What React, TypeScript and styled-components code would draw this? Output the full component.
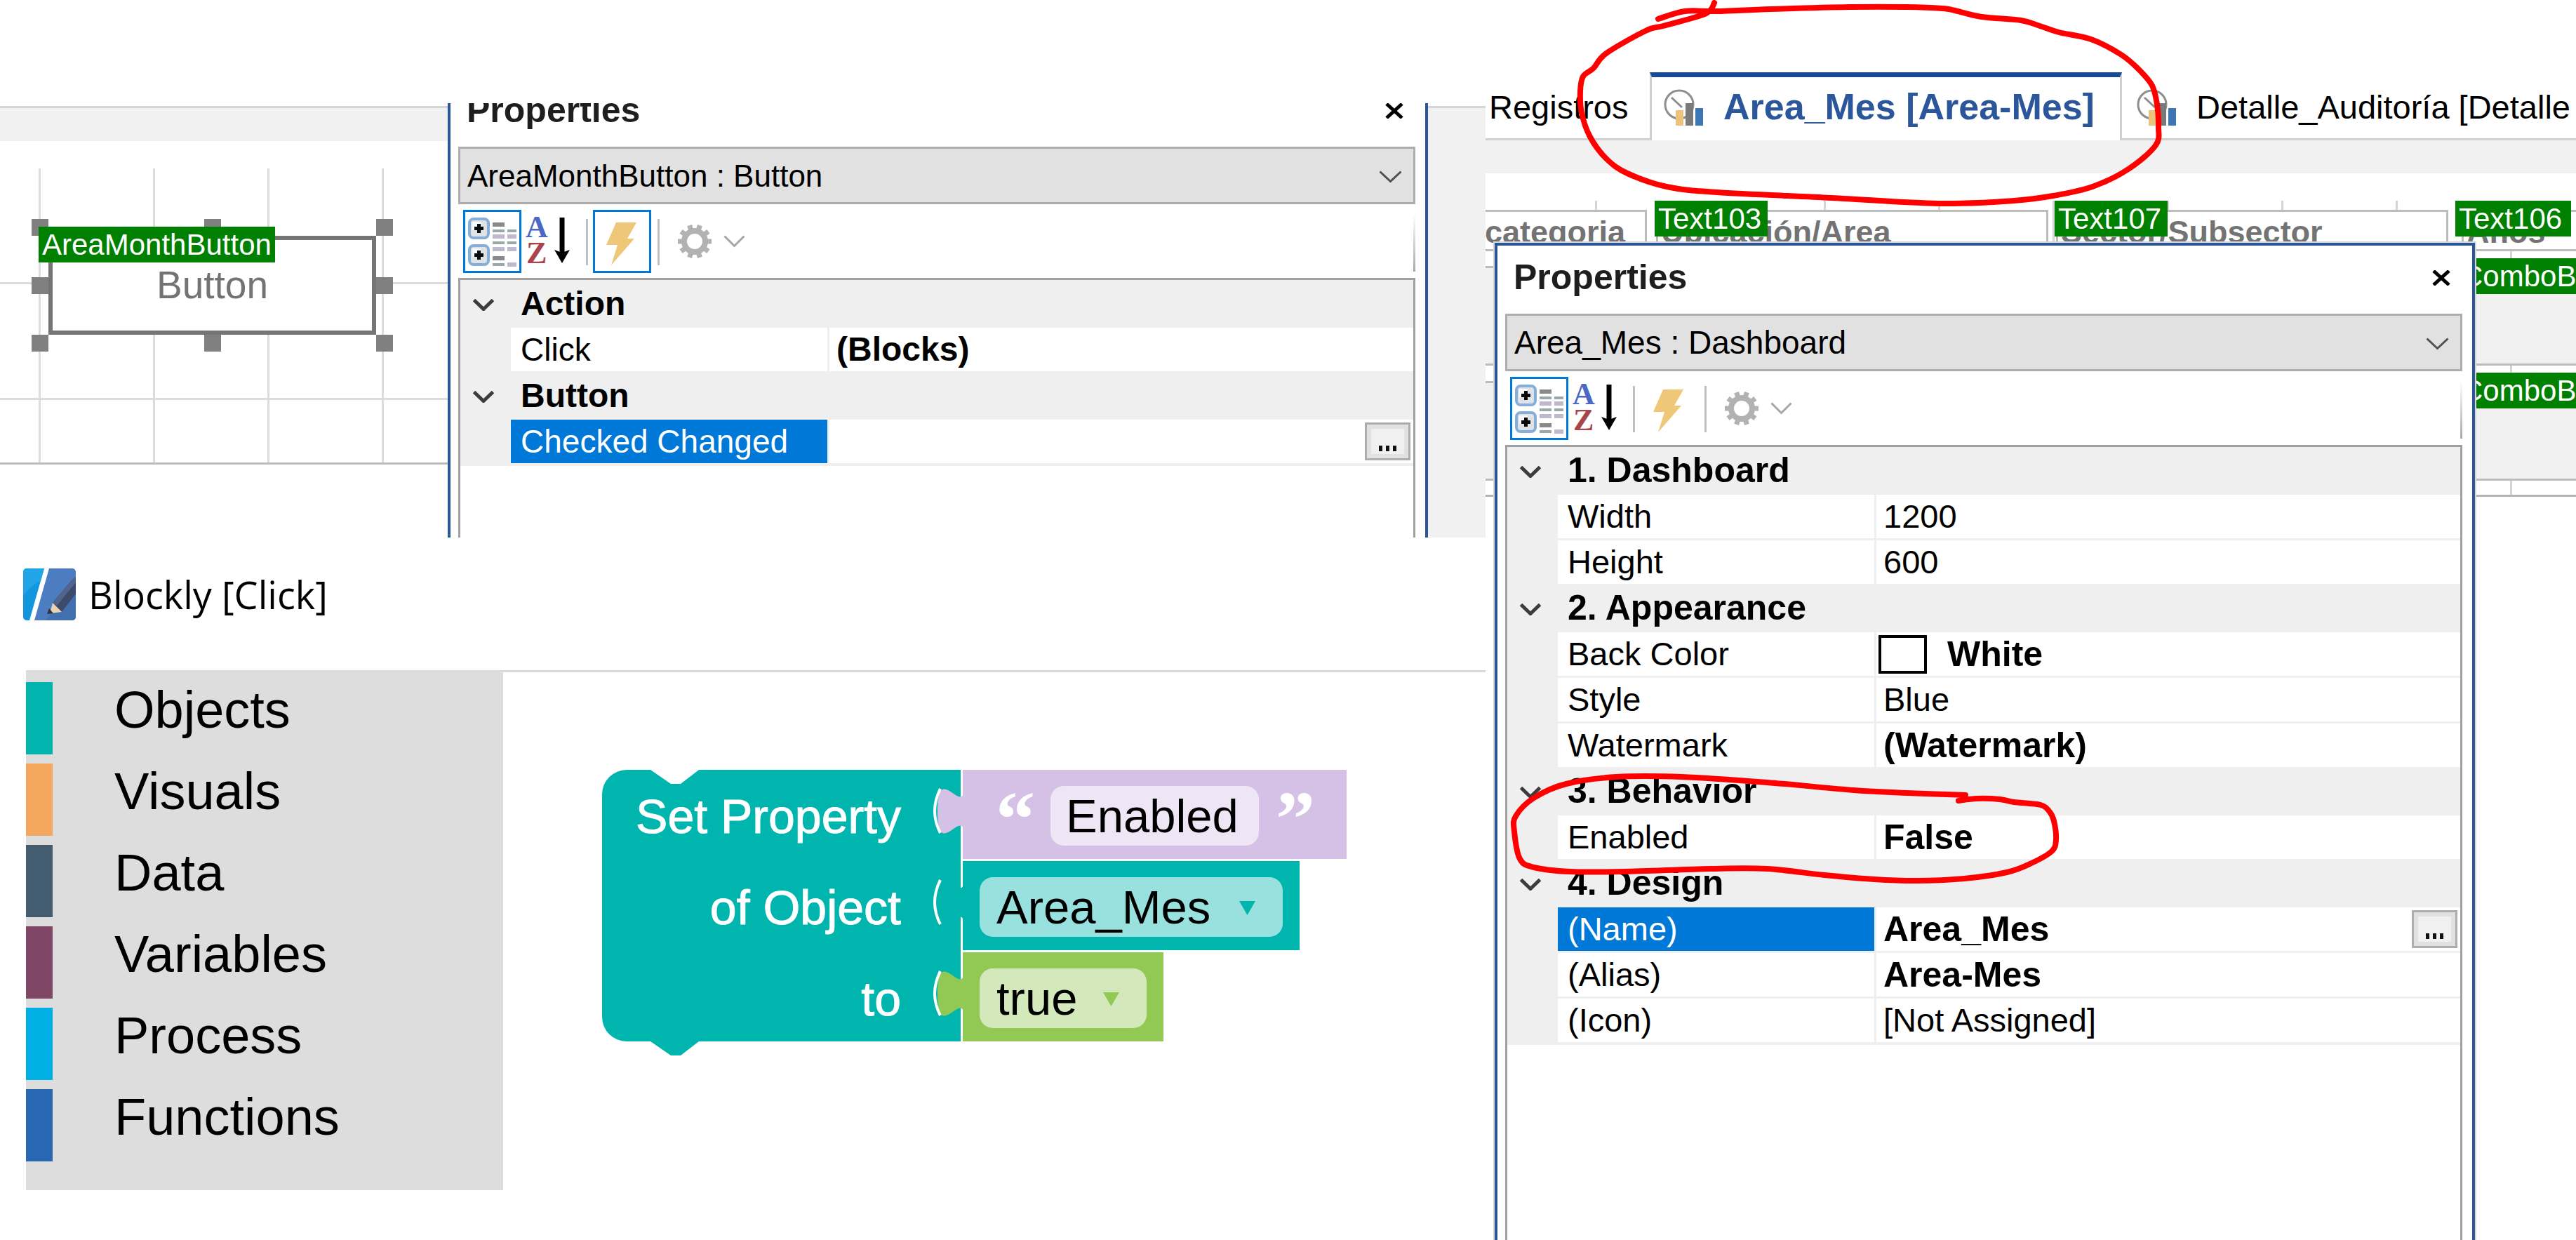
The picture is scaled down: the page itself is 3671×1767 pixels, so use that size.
import React from "react";
import styled, { createGlobalStyle, css } from "styled-components";

const BLUE = "#2b579a";
const ACCENT = "#0078d7";
const TEAL = "#00b5ad";
const LILAC = "#d4c1e5";
const GREEN = "#92c955";
const SANS = `"Liberation Sans", Arial, sans-serif`;

const GlobalStyle = createGlobalStyle`
  *, *::before, *::after { box-sizing: border-box; }
  body { margin: 0; background: #fff; font-family: ${SANS}; color: #000; }
  button, input, select { font: inherit; color: inherit; margin: 0; border-radius: 0; }
`;

/* ---------- page ---------- */

const Page = styled.main`
  display: grid;
  grid-template-columns: minmax(0, 2117fr) minmax(0, 1554fr);
  min-height: 100vh;
  overflow: hidden;
`;

const LeftColumn = styled.div`
  display: flex;
  flex-direction: column;
  padding-top: 147px;
  overflow: hidden;
`;

const RightColumn = styled.div`
  position: relative;
  overflow: hidden;
`;

const EventsShot = styled.section`
  display: flex;
  height: 619px;
  overflow: hidden;
`;

/* ---------- designer surface ---------- */

const Designer = styled.div`
  flex: 1;
  min-width: 0;
  padding-top: 4px;
`;

const Band = styled.div<{ $line?: boolean }>`
  height: ${(p) => (p.$line ? 50 : 47)}px;
  background: #f1f1f1;
  border-top: ${(p) => (p.$line ? "3px solid #d6d6d6" : "0")};
`;

const SideStrip = styled.div`
  flex: 0 0 82px;
  margin-top: 4px;
  border-top: 3px solid #d6d6d6;
  background: #f1f1f1;
`;

const gridLines = css`
  background-image: linear-gradient(90deg, #dcdcdc 3px, transparent 3px),
    linear-gradient(#dcdcdc 3px, transparent 3px);
`;

const Surface = styled.div`
  position: relative;
  height: 422px;
  margin-top: 39px;
  border-bottom: 3px solid #bdbdbd;
  ${gridLines}
  background-size: 163px 165px;
  background-position: 55px -3px;
`;

const Selection = styled.div`
  position: absolute;
  left: 69px;
  top: 96px;
  width: 467px;
  height: 141px;
`;

const CanvasButton = styled.button`
  display: block;
  width: 100%;
  height: 100%;
  padding: 0;
  border: 6px solid #757575;
  background: #fff;
  color: #737373;
  font-size: 55px;
  line-height: 129px;
`;

const Handle = styled.span<{ $x: string; $y: string }>`
  position: absolute;
  left: ${(p) => p.$x};
  top: ${(p) => p.$y};
  width: 24px;
  height: 24px;
  background: #808080;
`;

const NameTag = styled.span<{ $x: number; $y: number; $w?: number }>`
  position: absolute;
  left: ${(p) => p.$x}px;
  top: ${(p) => p.$y}px;
  ${(p) => (p.$w ? `width: ${p.$w}px;` : "")}
  height: 51px;
  padding: 0 5px;
  background: #008000;
  color: #fff;
  font-size: 42px;
  line-height: 51px;
  white-space: nowrap;
  overflow: hidden;
`;

/* ---------- properties window ---------- */

const Win = styled.section<{ $cropped?: boolean }>`
  display: flex;
  flex-direction: column;
  width: 1397px;
  border: 4px solid ${BLUE};
  border-bottom: 0;
  background: #fff;
  padding: 0 14px 0 11px;
  ${(p) =>
    p.$cropped
      ? "flex: 0 0 1397px; margin-top: -39px;"
      : "position: absolute; left: 13px; top: 346px; bottom: 0; box-shadow: 0 0 0 2px #d8d8d8;"}
`;

const TitleRow = styled.header`
  display: flex;
  justify-content: space-between;
  height: 97px;
  padding-left: 12px;
`;

const Title = styled.h2`
  margin: 0;
  font-size: 50px;
  line-height: 91px;
  font-weight: 700;
  color: #1e1e1e;
`;

const CloseButton = styled.button`
  height: 91px;
  padding: 0 16px;
  border: 0;
  background: none;
  line-height: 0;
`;

const ComboWrap = styled.div`
  position: relative;
  height: 82px;
`;

const Combo = styled.select<{ $size: number }>`
  appearance: none;
  width: 100%;
  height: 82px;
  padding: 0 10px;
  border: 3px solid #adadad;
  background: #e1e1e1;
  font-size: ${(p) => p.$size}px;
`;

const ComboArrow = styled.svg`
  position: absolute;
  right: 19px;
  top: 34px;
  pointer-events: none;
`;

const Toolbar = styled.div`
  display: flex;
  height: 105px;
  padding: 8px 0 7px 7px;
  background: linear-gradient(#fff, #a8a8a8) right 14px / 3px 82px no-repeat;
`;

const ToolButton = styled.button<{ $on?: boolean }>`
  flex: 0 0 83px;
  height: 90px;
  padding: 0;
  border: 3px solid ${(p) => (p.$on ? ACCENT : "transparent")};
  background: none;
  line-height: 0;
`;

const MenuButton = styled.button`
  display: flex;
  align-items: center;
  gap: 17px;
  height: 90px;
  padding: 0 16px 0 19px;
  border: 0;
  background: none;
`;

const Separator = styled.span`
  flex: 0 0 3px;
  height: 66px;
  margin: 13px 7px 0 9px;
  background: #c0c0c0;
`;

const GridBox = styled.div`
  flex: 1;
  border: 3px solid #a0a0a0;
  border-bottom: 0;
`;

const Table = styled.table<{ $size: number; $boldSize: number }>`
  --text: ${(p) => p.$size}px;
  --bold: ${(p) => p.$boldSize}px;
  width: 100%;
  table-layout: fixed;
  border-spacing: 0;
  border-top: 2px solid #efefef;
  border-bottom: 1px solid #efefef;
`;

const Gutter = styled.td`
  width: 72px;
  padding: 0 6px 0 0;
  background: #efefef;
  text-align: center;
  line-height: 0;
`;

const Category = styled.th`
  height: 66px;
  padding: 0 0 3px 14px;
  background: #efefef;
  text-align: left;
  font-size: var(--bold);
  line-height: 63px;
`;

const cell = css`
  height: 65px;
  padding: 0 4px 0 14px;
  border-bottom: 3px solid #efefef;
  font-size: var(--text);
  line-height: 62px;
  text-align: left;
  white-space: nowrap;
`;

const LabelCell = styled.th<{ $on?: boolean }>`
  ${cell}
  font-weight: 400;
  ${(p) => (p.$on ? `background: ${ACCENT}; color: #fff;` : "")}
`;

const ValueCell = styled.td<{ $bold?: boolean }>`
  ${cell}
  border-left: 3px solid #efefef;
  padding-left: 10px;
  ${(p) => (p.$bold ? "font-weight: 700; font-size: var(--bold);" : "")}
`;

const ValueLine = styled.div`
  display: flex;
  align-items: center;
  height: 62px;
`;

const Swatch = styled.span`
  width: 69px;
  height: 55px;
  margin: 0 29px 0 -7px;
  border: 4px solid #000;
  background: #fff;
`;

const Ellipsis = styled.button`
  display: flex;
  align-items: flex-end;
  justify-content: center;
  gap: 5px;
  width: 65px;
  height: 54px;
  margin-left: auto;
  padding-bottom: 10px;
  border: 3px solid #adadad;
  background: #f0f0f0;
  box-shadow: inset 0 0 0 6px #e1e1e1;
`;

const Dot = styled.i`
  width: 5px;
  height: 8px;
  background: #111;
`;

/* ---------- tabs and dashboard ---------- */

const TabBar = styled.nav`
  display: flex;
  height: 200px;
  padding-top: 103px;
`;

const Tab = styled.button<{ $active?: boolean; $pad: number; $width?: number }>`
  display: flex;
  align-items: center;
  gap: 28px;
  flex: ${(p) => (p.$width ? `0 0 ${p.$width}px` : "1")};
  min-width: 0;
  padding: 0 0 ${(p) => (p.$active ? 6 : 3)}px ${(p) => p.$pad}px;
  border: solid #d0d0d0;
  border-width: 7px 0 3px;
  border-top-color: transparent;
  background: #fff;
  background-clip: padding-box;
  font-size: 47px;
  text-align: left;
  white-space: nowrap;
  overflow: hidden;
  ${(p) =>
    p.$active
      ? `font-size: 52px; font-weight: 700; color: ${BLUE};
         border-width: 7px 3px 0; border-top-color: #174a96;`
      : ""}
`;

const Dashboard = styled.div`
  position: relative;
  height: 422px;
  margin-top: 39px;
  border-bottom: 3px solid #b4b4b4;
  background-image: linear-gradient(90deg, #d4d4d4 3px, transparent 3px);
  background-size: 163px 100%;
  background-position: 156px 0;
`;

const HeaderCell = styled.div<{ $x: number }>`
  position: absolute;
  left: ${(p) => p.$x}px;
  top: 13px;
  width: 559px;
  height: 59px;
  padding-left: 4px;
  border: 3px solid #bcbcbc;
  background: #fff;
  color: #737373;
  font-size: 45px;
  font-weight: 700;
  line-height: 58px;
  white-space: nowrap;
`;

const CroppedLead = styled.span`
  display: block;
  padding-right: 28px;
  text-align: right;
`;

const ComboBand = styled.div<{ $y: number }>`
  position: absolute;
  left: 0;
  right: 0;
  top: ${(p) => p.$y}px;
  height: 142px;
  border: solid #bcbcbc;
  border-width: 3px 0;
  background: #f1f1f1;
`;

const Mark = styled.svg<{ $x: number; $y: number }>`
  position: absolute;
  left: ${(p) => p.$x}px;
  top: ${(p) => p.$y}px;
  pointer-events: none;
`;

/* ---------- blockly ---------- */

const Blockly = styled.section`
  padding: 44px 0 0 37px;
`;

const BlocklyTitle = styled.h1`
  display: flex;
  align-items: center;
  gap: 18px;
  height: 74px;
  margin: 0 0 71px -4px;
  font-family: "Open Sans", "Noto Sans", sans-serif;
  font-size: 54px;
  line-height: 74px;
  font-weight: 400;
`;

const Workspace = styled.div`
  display: flex;
  align-items: flex-start;
  border-top: 3px solid #dadada;
`;

const Toolbox = styled.ul`
  display: flex;
  flex-direction: column;
  gap: 13px;
  flex: 0 0 680px;
  height: 738px;
  margin: 0;
  padding: 14px 0 0;
  background: #ddd;
  list-style: none;
`;

const ToolboxItem = styled.li<{ $color: string }>`
  height: 103px;
  padding-left: 88px;
  border-left: 38px solid ${(p) => p.$color};
  font-size: 74px;
  line-height: 80px;
`;

const Block = styled.div`
  position: relative;
  display: flex;
  flex-direction: column;
  gap: 3px;
  margin: 139px 0 0 141px;
  font-size: 67px;
`;

const BlockShape = styled.svg`
  position: absolute;
  left: 0;
  top: 0;
`;

const BlockRow = styled.div`
  position: relative;
  display: flex;
  height: 127px;
`;

const BlockLabel = styled.label`
  flex: 0 0 514px;
  padding: 6px 88px 0 0;
  color: #fff;
  font-size: 68px;
  line-height: 121px;
  text-align: right;
  -webkit-text-stroke: 1px #fff;
`;

const BlockValue = styled.div<{ $color: string; $pad?: number }>`
  display: flex;
  align-items: center;
  gap: 24px;
  padding: 4px ${(p) => p.$pad ?? 24}px 0;
  background: ${(p) => p.$color};
`;

const Quote = styled.span`
  align-self: flex-start;
  width: 54px;
  height: 123px;
  color: #fff;
  font: 700 112px/133px "Liberation Serif", serif;
`;

const fieldStyle = css`
  display: block;
  height: 85px;
  border: 0;
  border-radius: 19px;
  background: rgba(255, 255, 255, 0.6);
  color: #000;
`;

const TextField = styled.input`
  ${fieldStyle}
  width: 297px;
  padding: 0 22px;
`;

const FieldWrap = styled.div<{ $width: number }>`
  position: relative;
  width: ${(p) => p.$width}px;
`;

const SelectField = styled.select`
  ${fieldStyle}
  appearance: none;
  width: 100%;
  padding: 0 24px;
`;

const FieldArrow = styled.svg`
  position: absolute;
  right: 39px;
  top: 34px;
  pointer-events: none;
`;

/* ---------- drawings ---------- */

const Chevron = ({ w = 33, h = 18, color = "#505050", stroke = 3 }) => (
  <svg width={w} height={h} viewBox={`0 0 ${w} ${h}`} fill="none">
    <path d={`M1.5 1.5 L${w / 2} ${h - 2.5} L${w - 1.5} 1.5`} stroke={color} strokeWidth={stroke} />
  </svg>
);

const CategorizedIcon = () => {
  const plus = (y: number) => (
    <g key={y}>
      <rect x="6" y={y} width="27" height="27" rx="6" fill="#dfe3e6" stroke="#85aedb" strokeWidth="4" />
      <rect x="10" y={y + 4} width="12" height="12" fill="#f6f9fb" />
      <path d={`M19.5 ${y + 7} v13 M13 ${y + 13.5} h13`} stroke="#0a0a0a" strokeWidth="5" />
    </g>
  );
  return (
    <svg width="77" height="84" viewBox="0 0 77 84">
      {plus(10)}
      {plus(48)}
      <path d="M39 18h17 M39 66h17" stroke="#8a8a8a" strokeWidth="6" />
      <path d="M39 27h17 M39 44h17 M60 27h13 M60 44h13 M39 75h17" stroke="#9aa8ac" strokeWidth="4" />
      <path d="M39 35h17 M39 53h17 M60 35h13 M60 53h13 M60 75h13" stroke="#c0b8cf" strokeWidth="6" />
    </svg>
  );
};

const SortIcon = () => (
  <svg width="77" height="84" viewBox="0 0 77 84">
    <g fontFamily="Liberation Serif, serif" fontWeight="700" fontSize="44">
      <text x="3" y="36" fill="#4a68c4">A</text>
      <text x="4" y="73" fill="#a8454b">Z</text>
    </g>
    <path d="M55 8v52" stroke="#000" strokeWidth="7" />
    <path d="M44 54l11 4 11-4-11 19z" fill="#000" />
  </svg>
);

const BoltIcon = () => (
  <svg width="77" height="84" viewBox="0 0 77 84">
    <path d="M30 15h29L46 38h10L23 76l9-29H16z" fill="#efc778" />
  </svg>
);

const GearIcon = () => (
  <svg width="48" height="50" viewBox="0 0 48 50">
    <g transform="translate(24 25)" fill="none" stroke="#b2b2b2">
      <circle r="15" strokeWidth="8" />
      {Array.from({ length: 10 }, (_, i) => (
        <path key={i} d="M0 -17V-24" strokeWidth="7" transform={`rotate(${18 + i * 36})`} />
      ))}
    </g>
  </svg>
);

const CloseIcon = () => (
  <svg width="28" height="22" viewBox="0 0 28 22">
    <path d="M3 1l22 20M25 1L3 21" stroke="#000" strokeWidth="5" />
  </svg>
);

const IconBox = styled.svg`
  flex-shrink: 0;
`;

const DashboardIcon = () => (
  <IconBox width="57" height="53" viewBox="0 0 57 53">
    <circle cx="22" cy="23" r="20" fill="#fff" stroke="#8d8d8d" strokeWidth="3" />
    <path d="M11 13l15 14" stroke="#8d8d8d" strokeWidth="3" />
    <path d="M17 31h11v22H17z" fill="#ebc37d" />
    <path d="M31 21h11v32H31z" fill="#7a7a7a" />
    <path d="M45 28h11v25H45z" fill="#3d76b5" />
  </IconBox>
);

const BlocklyLogo = () => (
  <svg width="75" height="74" viewBox="0 0 75 74">
    <path d="M5 0h25L9 74H5a5 5 0 0 1-5-5V5a5 5 0 0 1 5-5z" fill="#1296dd" />
    <path d="M5 0h25l-5 18C18 20 9 28 0 38V5a5 5 0 0 1 5-5z" fill="#22a5e6" />
    <path d="M37 0h33a5 5 0 0 1 5 5v64a5 5 0 0 1-5 5H16z" fill="#4d7dc1" />
    <path d="M75 34v35a5 5 0 0 1-5 5H32l10-12z" fill="#426fae" />
    <path d="M75 12v24L55 62 42 49 69 17z" fill="#3d4a6b" />
    <path d="M75 12v8L48 53l-6-4 27-32z" fill="#53648c" />
    <path d="M42 49l13 13-17 2z" fill="#ead3ad" />
    <path d="M37 57l6 7-9 1z" fill="#2d3340" />
  </svg>
);

type Point = [number, number];

/* Turns hand-placed points into one continuous pen stroke. */
const penStroke = (pts: Point[]) => {
  let d = `M${pts[0][0]} ${pts[0][1]}`;
  for (let i = 0; i < pts.length - 1; i++) {
    const a = pts[Math.max(i - 1, 0)];
    const b = pts[i];
    const c = pts[i + 1];
    const e = pts[Math.min(i + 2, pts.length - 1)];
    d += `C${b[0] + (c[0] - a[0]) / 6} ${b[1] + (c[1] - a[1]) / 6} ${c[0] - (e[0] - b[0]) / 6} ${
      c[1] - (e[1] - b[1]) / 6
    } ${c[0]} ${c[1]}`;
  }
  return d;
};

const TAB_MARK: Point[] = [
  [246, 27], [284, 16], [330, 16], [406, 13], [519, 10], [600, 10], [651, 12], [669, 15], [707, 24],
  [763, 29], [790, 37], [817, 46], [863, 56], [906, 78], [932, 100], [950, 122], [957, 149],
  [959, 180], [955, 207], [916, 241], [865, 266], [809, 279], [753, 286], [646, 290],
  [493, 282], [330, 274], [258, 266], [202, 247], [172, 226], [149, 195], [137, 161],
  [135, 130], [139, 109], [154, 97], [172, 76], [228, 44], [253, 37], [304, 23], [320, 15], [326, 4],
];

const ENABLED_MARK: Point[] = [
  [684, 1133], [600, 1130], [524, 1126], [401, 1115], [279, 1107], [187, 1107], [115, 1117],
  [69, 1137], [43, 1163], [41, 1185], [49, 1224], [69, 1236], [120, 1242], [197, 1242],
  [320, 1238], [401, 1238], [483, 1247], [554, 1253], [615, 1255], [682, 1252], [743, 1243],
  [778, 1230], [807, 1213], [813, 1196], [810, 1170], [804, 1157], [791, 1147], [753, 1143],
  [733, 1139], [700, 1138], [674, 1141],
];

const RedMark = ({ x, y, w, h, points }: { x: number; y: number; w: number; h: number; points: Point[] }) => (
  <Mark $x={x} $y={y} width={w} height={h} viewBox={`${x} ${y} ${w} ${h}`} aria-hidden>
    <path d={penStroke(points)} fill="none" stroke="#f00" strokeWidth="8" strokeLinecap="round" strokeLinejoin="round" />
  </Mark>
);

/* ---------- composed parts ---------- */

type Row = { label: string; value?: string; bold?: boolean; swatch?: boolean; selected?: boolean };
type Group = { name: string; rows: Row[] };

const PropertiesWindow = ({
  object,
  comboSize,
  textSize,
  boldSize,
  events,
  cropped,
  groups,
}: {
  object: string;
  comboSize: number;
  textSize: number;
  boldSize: number;
  events?: boolean;
  cropped?: boolean;
  groups: Group[];
}) => (
  <Win $cropped={cropped}>
    <TitleRow>
      <Title>Properties</Title>
      <CloseButton aria-label="Close"><CloseIcon /></CloseButton>
    </TitleRow>
    <ComboWrap>
      <Combo $size={comboSize} aria-label="Object" defaultValue={object}>
        <option>{object}</option>
      </Combo>
      <ComboArrow width="33" height="18"><Chevron /></ComboArrow>
    </ComboWrap>
    <Toolbar>
      <ToolButton $on aria-label="Categorized"><CategorizedIcon /></ToolButton>
      <ToolButton aria-label="Alphabetical"><SortIcon /></ToolButton>
      <Separator />
      <ToolButton $on={events} aria-label="Events"><BoltIcon /></ToolButton>
      <Separator />
      <MenuButton aria-label="Settings">
        <GearIcon />
        <Chevron w={31} color="#a6a6a6" />
      </MenuButton>
    </Toolbar>
    <GridBox>
      <Table $size={textSize} $boldSize={boldSize}>
        <colgroup>
          <col style={{ width: 72 }} />
          <col style={{ width: 451 }} />
          <col />
        </colgroup>
        {groups.map((g) => (
          <tbody key={g.name}>
            <tr>
              <Gutter><Chevron w={30} h={17} color="#3c3c3c" stroke={5} /></Gutter>
              <Category colSpan={2}>{g.name}</Category>
            </tr>
            {g.rows.map((r) => (
              <tr key={r.label}>
                <Gutter />
                <LabelCell scope="row" $on={r.selected}>{r.label}</LabelCell>
                <ValueCell $bold={r.bold}>
                  <ValueLine>
                    {r.swatch && <Swatch />}
                    {r.value}
                    {r.selected && (
                      <Ellipsis aria-label="Edit"><Dot /><Dot /><Dot /></Ellipsis>
                    )}
                  </ValueLine>
                </ValueCell>
              </tr>
            ))}
          </tbody>
        ))}
      </Table>
    </GridBox>
  </Win>
);

const eventGroups: Group[] = [
  { name: "Action", rows: [{ label: "Click", value: "(Blocks)", bold: true }] },
  { name: "Button", rows: [{ label: "Checked Changed", selected: true }] },
];

const dashboardGroups: Group[] = [
  { name: "1. Dashboard", rows: [{ label: "Width", value: "1200" }, { label: "Height", value: "600" }] },
  {
    name: "2. Appearance",
    rows: [
      { label: "Back Color", value: "White", bold: true, swatch: true },
      { label: "Style", value: "Blue" },
      { label: "Watermark", value: "(Watermark)", bold: true },
    ],
  },
  { name: "3. Behavior", rows: [{ label: "Enabled", value: "False", bold: true }] },
  {
    name: "4. Design",
    rows: [
      { label: "(Name)", value: "Area_Mes", bold: true, selected: true },
      { label: "(Alias)", value: "Area-Mes", bold: true },
      { label: "(Icon)", value: "[Not Assigned]" },
    ],
  },
];

const toolbox = [
  ["Objects", TEAL],
  ["Visuals", "#f4a85e"],
  ["Data", "#435c70"],
  ["Variables", "#7f4665"],
  ["Process", "#00b0e4"],
  ["Functions", "#2868b2"],
];

const handles: [string, string][] = [
  ["-24px", "-24px"], ["calc(50% - 12px)", "-24px"], ["100%", "-24px"],
  ["-24px", "calc(50% - 12px)"], ["100%", "calc(50% - 12px)"],
  ["-24px", "100%"], ["calc(50% - 12px)", "100%"], ["100%", "100%"],
];

const connectors: [number, string][] = [[23, LILAC], [153, TEAL], [283, GREEN]];

const ArrowDown = ({ color }: { color: string }) => (
  <FieldArrow width="23" height="20" viewBox="0 0 23 20">
    <path d="M0 0h23L11.5 20z" fill={color} />
  </FieldArrow>
);

const PropertyBlock = () => (
  <Block>
    <BlockShape width="520" height="407" viewBox="0 0 520 407" aria-hidden>
      <path
        d="M35 0H69l29 20h14l26-20H511V387H138l-26 20H98L69 387H35A35 35 0 0 1 0 352V35A35 35 0 0 1 35 0z"
        fill={TEAL}
      />
      {connectors.map(([y, color]) => (
        <g key={y}>
          <path d={`M516 ${y}c0 48-38-38-38 36s38-12 38 36z`} fill={color} />
          <path d={`M482 ${y + 4}q-16 32 0 63`} fill="none" stroke="#fff" strokeWidth="4" />
        </g>
      ))}
    </BlockShape>
    <BlockRow>
      <BlockLabel htmlFor="prop">Set Property</BlockLabel>
      <BlockValue $color={LILAC} $pad={47}>
        <Quote>“</Quote>
        <TextField id="prop" defaultValue="Enabled" />
        <Quote>”</Quote>
      </BlockValue>
    </BlockRow>
    <BlockRow>
      <BlockLabel htmlFor="object">of Object</BlockLabel>
      <BlockValue $color={TEAL}>
        <FieldWrap $width={432}>
          <SelectField id="object"><option>Area_Mes</option></SelectField>
          <ArrowDown color={TEAL} />
        </FieldWrap>
      </BlockValue>
    </BlockRow>
    <BlockRow>
      <BlockLabel htmlFor="value">to</BlockLabel>
      <BlockValue $color={GREEN}>
        <FieldWrap $width={238}>
          <SelectField id="value"><option>true</option></SelectField>
          <ArrowDown color={GREEN} />
        </FieldWrap>
      </BlockValue>
    </BlockRow>
  </Block>
);

export default function App() {
  return (
    <Page>
      <GlobalStyle />
      <LeftColumn>
        <EventsShot>
          <Designer>
            <Band $line />
            <Surface>
              <Selection>
                <CanvasButton>Button</CanvasButton>
                {handles.map(([x, y]) => (
                  <Handle key={x + y} $x={x} $y={y} />
                ))}
                <NameTag $x={-14} $y={-13} $w={337}>AreaMonthButton</NameTag>
              </Selection>
            </Surface>
          </Designer>
          <PropertiesWindow
            cropped
            events
            object="AreaMonthButton : Button"
            comboSize={44}
            textSize={46}
            boldSize={48}
            groups={eventGroups}
          />
          <SideStrip />
        </EventsShot>

        <Blockly>
          <BlocklyTitle><BlocklyLogo />Blockly [Click]</BlocklyTitle>
          <Workspace>
            <Toolbox>
              {toolbox.map(([name, color]) => (
                <ToolboxItem key={name} $color={color}>{name}</ToolboxItem>
              ))}
            </Toolbox>
            <PropertyBlock />
          </Workspace>
        </Blockly>
      </LeftColumn>

      <RightColumn>
        <TabBar>
          <Tab $pad={5} $width={234}>Registros</Tab>
          <Tab $active $pad={17} $width={673}><DashboardIcon />Area_Mes [Area-Mes]</Tab>
          <Tab $pad={21}><DashboardIcon />Detalle_Auditoría [Detalle Auditoría]</Tab>
        </TabBar>
        <Band />
        <Dashboard>
          <HeaderCell $x={-329}><CroppedLead>Subcategoria</CroppedLead></HeaderCell>
          <HeaderCell $x={243}>Ubicación/Area</HeaderCell>
          <HeaderCell $x={813}>Sector/Subsector</HeaderCell>
          <HeaderCell $x={1391}>Años</HeaderCell>
          <ComboBand $y={93} />
          <ComboBand $y={257} />
          <NameTag $x={241} $y={0} $w={161}>Text103</NameTag>
          <NameTag $x={811} $y={0} $w={161}>Text107</NameTag>
          <NameTag $x={1382} $y={0} $w={165}>Text106</NameTag>
          <NameTag $x={1386} $y={82} $w={300}>ComboBox</NameTag>
          <NameTag $x={1386} $y={245} $w={300}>ComboBox</NameTag>
        </Dashboard>
        <PropertiesWindow
          object="Area_Mes : Dashboard"
          comboSize={46}
          textSize={47}
          boldSize={50}
          groups={dashboardGroups}
        />
        <RedMark x={120} y={0} w={860} h={310} points={TAB_MARK} />
        <RedMark x={20} y={1090} w={810} h={180} points={ENABLED_MARK} />
      </RightColumn>
    </Page>
  );
}
